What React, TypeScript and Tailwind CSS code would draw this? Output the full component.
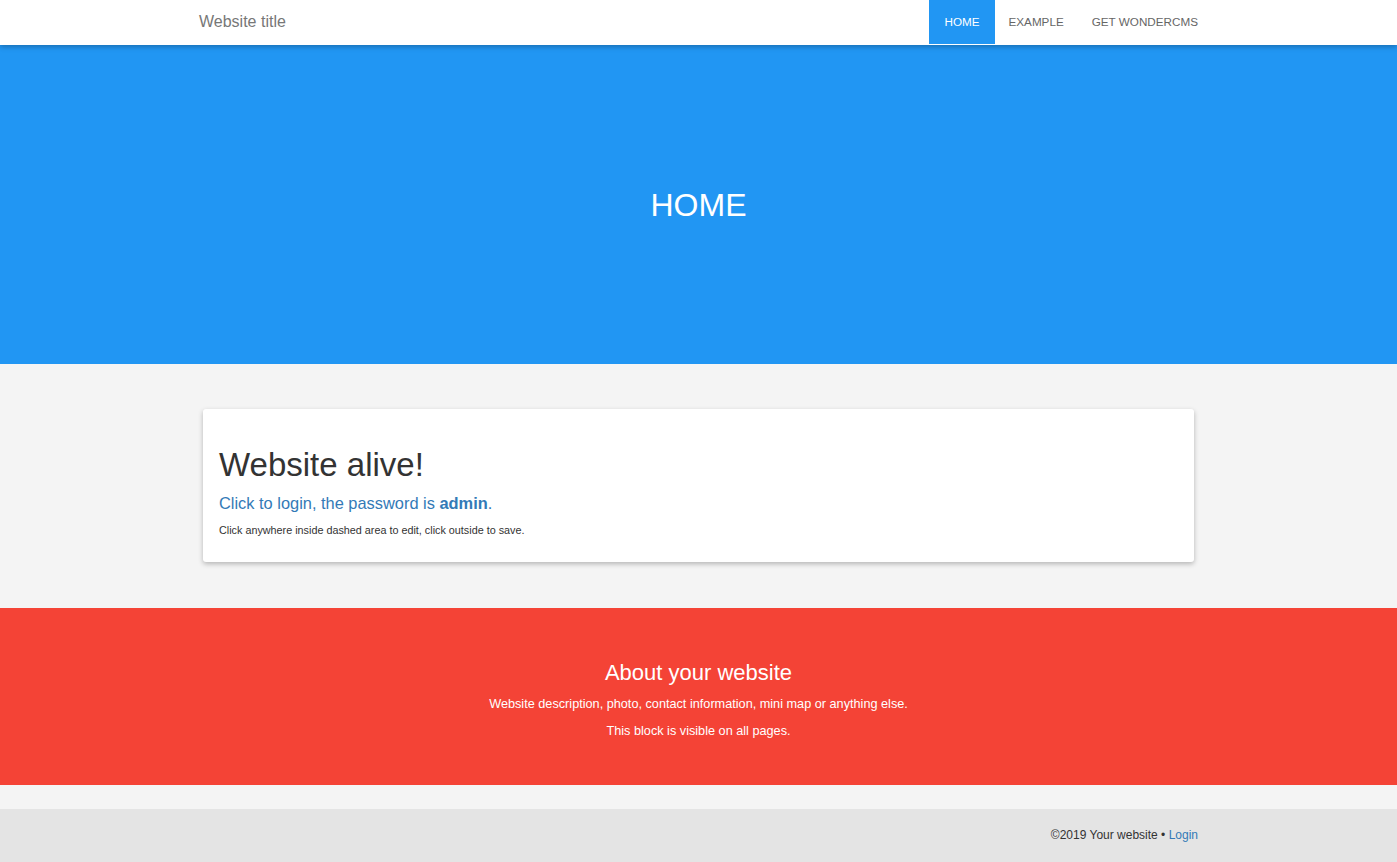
export default function App() {
  const font = { fontFamily: '"Liberation Sans", Arial, Helvetica, sans-serif' };
  return (
    <div className="min-h-[862px] bg-[#f4f4f4]" style={font}>
      <nav className="relative z-10 h-[45px] bg-white shadow-[0_2px_5px_rgba(0,0,0,0.26)]">
        <div className="mx-auto flex h-[44px] w-[1029px] items-center justify-between">
          <a className="px-[15px] text-[16px] leading-[20px] text-[#777]">Website title</a>
          <ul className="flex h-full pr-[1px]">
            <li className="flex h-full items-center bg-[#2196f3] px-[15px] text-[11.7px] text-white">HOME</li>
            <li className="flex h-full items-center px-[14px] text-[11.7px] text-[#666]">EXAMPLE</li>
            <li className="flex h-full items-center px-[14px] text-[11.7px] text-[#666]">GET WONDERCMS</li>
          </ul>
        </div>
      </nav>
      <header className="flex h-[319px] items-center justify-center bg-[#2196f3]">
        <h1 className="text-[32px] leading-[36px] text-white">HOME</h1>
      </header>
      <main className="pt-[45px] pb-[46px]">
        <div className="mx-auto w-[991px] rounded-[3px] bg-white px-4 pt-[38px] pb-[24px] shadow-[0_2px_5px_rgba(0,0,0,0.26)]">
          <h2 className="text-[33px] leading-[36px] text-[#333]">Website alive!</h2>
          <h3 className="mt-[8px] text-[16.4px] leading-[24px] text-[#337ab7]">
            Click to login, the password is <b>admin</b>.
          </h3>
          <p className="mt-[7px] text-[10.8px] leading-[16px] text-[#333]">
            Click anywhere inside dashed area to edit, click outside to save.
          </p>
        </div>
      </main>
      <section className="h-[177px] bg-[#f44336] pt-[52px] text-center text-white">
        <h3 className="text-[22px] leading-[26px]">About your website</h3>
        <p className="mt-[5px] text-[12.7px] leading-[27px]">
          Website description, photo, contact information, mini map or anything else.
        </p>
        <p className="text-[12.7px] leading-[27px]">This block is visible on all pages.</p>
      </section>
      <footer className="mt-[24px] h-[53px] bg-[#e4e4e4] pt-[18px]">
        <div className="mx-auto w-[999px] text-right text-[12px] leading-[17px] text-[#333]">
          ©2019 Your website • <a className="text-[#337ab7]">Login</a>
        </div>
      </footer>
    </div>
  );
}
